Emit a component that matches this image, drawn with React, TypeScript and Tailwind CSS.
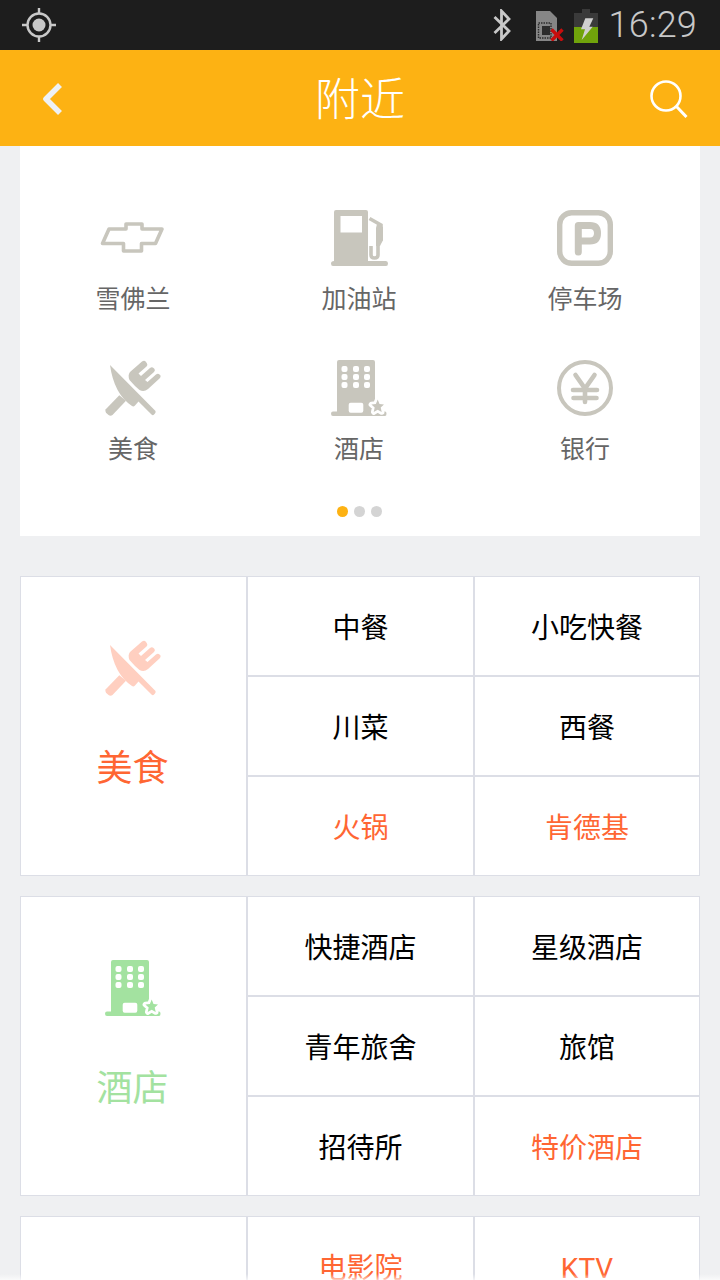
import React from 'react';

const FONT = "font-['Roboto','Noto_Sans_CJK_SC',sans-serif]";

type IconProps = { className?: string };

const IconSvg: React.FC<React.PropsWithChildren<IconProps>> = ({ className, children }) => (
    <svg viewBox="0 0 56 56" className={`w-14 h-14 overflow-visible ${className ?? ''}`} fill="currentColor">
        {children}
    </svg>
);

const ChevyIcon: React.FC<IconProps> = ({ className }) => (
    <IconSvg className={className}>
        <path
            d="M-2.5 33.5 L4 19 H21 V14 H37 V19 H57 L50.5 33.5 H36.5 V41 H18.5 V33.5 Z"
            fill="none"
            stroke="currentColor"
            strokeWidth="3.6"
            strokeLinejoin="round"
        />
    </IconSvg>
);

const GasIcon: React.FC<IconProps> = ({ className }) => (
    <IconSvg className={className}>
        <path
            fillRule="evenodd"
            d="M5 0 H35 Q37 0 37 2 V51 H55 Q57 51 57 53.5 Q57 56 55 56 H2 Q0 56 0 53.5 Q0 51 3 51 V2 Q3 0 5 0 Z M9.5 6 V22.5 H31 V6 Z"
        />
        <path d="M38.5 8.5 L50 15 V30 L47 34 V45 Q47 48 43.5 48 Q40 48 40 45 V36" fill="none" stroke="currentColor" strokeWidth="3.6" />
        <path d="M46 14 L52 17 V30 L49 36 H45 V18 Z" />
    </IconSvg>
);

const ParkingIcon: React.FC<IconProps> = ({ className }) => (
    <IconSvg className={className}>
        <rect x="2.7" y="2.7" width="50.6" height="50.6" rx="12" fill="none" stroke="currentColor" strokeWidth="5.4" />
        <path
            d="M21.3 42 V15.5 H33 Q40.5 15.5 40.5 23.3 Q40.5 31 33 31 H21.3"
            fill="none"
            stroke="currentColor"
            strokeWidth="7"
            strokeLinecap="round"
            strokeLinejoin="round"
        />
    </IconSvg>
);

const FoodIcon: React.FC<IconProps> = ({ className }) => (
    <IconSvg className={className}>
        {/* knife */}
        <path d="M5 5 L50.5 51 Q51 52 50 53.5 L48.5 55 Q47.5 55.5 46.5 54.5 L33.5 41.5 L30 45.5 Q28.5 47 27 46 Q9 34 5 5 Z" />
        {/* fork handle */}
        <path d="M0.5 49.5 L14.3 35.2 L21 40.8 L7.5 55 Q5.5 56.3 3.5 55 L1 52.8 Q0 51 0.5 49.5 Z" />
        {/* fork head */}
        <path d="M25 12 L37 1.5 Q39.5 0 41 2 L42 3.5 Q43 5 41.5 6.5 L33.5 13.5 L36 16 L45 8 Q47 6.5 48.5 8 L49.5 9 Q50.5 10.5 49 12 L40 20 L42.5 22 L51 14.5 Q53 13 54.5 14.5 L55.5 15.5 Q56 17 54.5 18.5 L43 29 Q39 32.5 34.5 30 L30 26 L24.5 20 Q22.5 15 25 12 Z" />
    </IconSvg>
);

const STAR = 'M46.7 39.5 L48.5 44 L53 44.5 L49.7 47.5 L50.7 52 L46.7 49.7 L42.7 52 L43.7 47.5 L40.4 44.5 L44.9 44 Z';

const HotelIcon: React.FC<IconProps> = ({ className }) => (
    <IconSvg className={className}>
        <path d="M8 0 H42 Q44 0 44 2 V51.5 H54 Q55.5 51.5 55.5 53.7 Q55.5 56 54 56 H2 Q0 56 0 53.7 Q0 51.5 2 51.5 H6 V2 Q6 0 8 0 Z" />
        <g fill="#fff">
            <rect x="10.5" y="6" width="6" height="6" rx="2" />
            <rect x="22" y="6" width="6" height="6" rx="2" />
            <rect x="33" y="6" width="6" height="6" rx="2" />
            <rect x="10.5" y="14" width="6" height="6" rx="2" />
            <rect x="22" y="14" width="6" height="6" rx="2" />
            <rect x="33" y="14" width="6" height="6" rx="2" />
            <rect x="10.5" y="22" width="6" height="6" rx="2" />
            <rect x="22" y="22" width="6" height="6" rx="2" />
            <rect x="33" y="22" width="6" height="6" rx="2" />
            <rect x="17.7" y="42.7" width="14.6" height="10" rx="2" />
        </g>
        <path d={STAR} fill="#fff" stroke="#fff" strokeWidth="5.5" strokeLinejoin="round" />
        <path d={STAR} />
    </IconSvg>
);

const YenIcon: React.FC<IconProps> = ({ className }) => (
    <IconSvg className={className}>
        <circle cx="28" cy="28" r="26" fill="none" stroke="currentColor" strokeWidth="4" />
        <path
            d="M18.5 15 L28 28.5 L37.5 15 M28 28.5 V42 M16 30 H40 M16.5 38 H39.5"
            fill="none"
            stroke="currentColor"
            strokeWidth="4.6"
            strokeLinecap="round"
        />
    </IconSvg>
);

const StatusBar: React.FC = () => (
    <div className="h-[50px] shrink-0 bg-[#1d1d1d] flex items-center pl-[22px] pr-[23px] text-[#c8c8c8]">
        {/* GPS */}
        <svg viewBox="0 0 34 34" className="w-[34px] h-[34px]">
            <circle cx="17" cy="17" r="11.5" fill="none" stroke="currentColor" strokeWidth="2.4" />
            <circle cx="17" cy="17" r="6.5" fill="currentColor" />
            <path d="M17 0 V6 M17 28 V34 M0 17 H6 M28 17 H34" stroke="currentColor" strokeWidth="2.4" />
        </svg>
        <div className="flex-1" />
        {/* Bluetooth */}
        <svg viewBox="0 0 18 32" className="w-[18px] h-[32px]">
            <path d="M1.5 8 L16 22 L8.5 30 V2 L16 10 L1.5 24" fill="none" stroke="currentColor" strokeWidth="2.8" />
        </svg>
        {/* SIM */}
        <svg viewBox="0 0 28 32" className="w-[28px] h-[32px] ml-[25px]">
            <path d="M0 2 H14 L21 9 V32 H0 Z" fill="#868686" />
            <rect x="2.5" y="14" width="12.5" height="15" fill="none" stroke="#2c2c2c" strokeWidth="1.4" strokeDasharray="1.5 1" />
            <rect x="6" y="17" width="8" height="9" fill="#2c2c2c" />
            <path d="M15.5 20.5 L26.5 31.5 M26.5 20.5 L15.5 31.5" stroke="#c80d0d" strokeWidth="3.4" />
        </svg>
        {/* Battery */}
        <svg viewBox="0 0 24 34" className="w-[24px] h-[34px] ml-[10px] mt-[1px]">
            <rect x="8" y="0" width="8" height="4" fill="#3a3a3a" />
            <rect x="0" y="4" width="24" height="14" fill="#3a3a3a" />
            <rect x="0" y="18" width="24" height="16" fill="#70a30b" />
            <path d="M11.3 9.3 H19.3 L15.3 17.7 H18.7 L7.7 31 L11 20.3 H7 Z" fill="#d0d0d0" />
        </svg>
        <span className="ml-[11px] font-['Roboto',sans-serif] font-light text-[36px] leading-[50px] tracking-[0.2px]">16:29</span>
    </div>
);

const TopBar: React.FC = () => (
    <header className="h-24 shrink-0 bg-[#fdb213] flex items-center pl-[40px] pr-[32px]">
        <div className="flex-1">
            <svg viewBox="0 0 24 34" className="w-6 h-[34px] mt-[2px]">
                <path d="M20 3 L6 17 L20 31" fill="none" stroke="#eef1f5" strokeWidth="5.6" strokeLinejoin="round" />
            </svg>
        </div>
        <h1 className={`${FONT} text-white text-[45px] leading-none font-light pt-1`}>附近</h1>
        <div className="flex-1 flex justify-end pl-[8px]">
            <svg viewBox="0 0 38 38" className="w-[38px] h-[38px] mt-[1px]">
                <circle cx="16" cy="16" r="14.5" fill="none" stroke="#fff" strokeWidth="2.6" />
                <path d="M26.5 26.5 L36.5 37" fill="none" stroke="#fff" strokeWidth="3" />
            </svg>
        </div>
    </header>
);

const shortcuts = [
    { label: '雪佛兰', Icon: ChevyIcon },
    { label: '加油站', Icon: GasIcon },
    { label: '停车场', Icon: ParkingIcon },
    { label: '美食', Icon: FoodIcon },
    { label: '酒店', Icon: HotelIcon },
    { label: '银行', Icon: YenIcon },
];

const ShortcutCard: React.FC = () => (
    <section className="mx-5 h-[390px] shrink-0 bg-white pt-16">
        <div className="grid grid-cols-[226px_226px_226px] grid-rows-[150px_150px]">
            {shortcuts.map(({ label, Icon }) => (
                <div key={label} className="flex flex-col items-center">
                    <Icon className="text-[#c8c6bd]" />
                    <span className={`${FONT} mt-4 text-[25px] leading-9 text-[#666666]`}>{label}</span>
                </div>
            ))}
        </div>
        <div className="flex justify-center gap-[6px] -mt-[4px] pr-[2px]">
            <span className="w-[11px] h-[11px] rounded-full bg-[#fdb213]" />
            <span className="w-[11px] h-[11px] rounded-full bg-[#d4d4d4]" />
            <span className="w-[11px] h-[11px] rounded-full bg-[#d4d4d4]" />
        </div>
    </section>
);

type Cell = { text: string; hot?: boolean };

type Category = {
    title?: string;
    titleClass?: string;
    Icon?: React.FC<IconProps>;
    iconClass?: string;
    cells: Cell[];
};

const categories: Category[] = [
    {
        title: '美食',
        titleClass: 'text-[#ff6633]',
        Icon: FoodIcon,
        iconClass: 'text-[#ffcfc0]',
        cells: [{ text: '中餐' }, { text: '小吃快餐' }, { text: '川菜' }, { text: '西餐' }, { text: '火锅', hot: true }, { text: '肯德基', hot: true }],
    },
    {
        title: '酒店',
        titleClass: 'text-[#a3e2a0]',
        Icon: HotelIcon,
        iconClass: 'text-[#a3e2a0]',
        cells: [{ text: '快捷酒店' }, { text: '星级酒店' }, { text: '青年旅舍' }, { text: '旅馆' }, { text: '招待所' }, { text: '特价酒店', hot: true }],
    },
    {
        // cut off by the bottom of the screen
        cells: [{ text: '电影院', hot: true }, { text: 'KTV', hot: true }, { text: '' }, { text: '' }, { text: '' }, { text: '' }],
    },
];

const CategoryBlock: React.FC<{ category: Category }> = ({ category }) => {
    const { title, titleClass, Icon, iconClass, cells } = category;
    return (
        <section className="mx-5 h-[300px] shrink-0 border border-[#dcdee6] bg-[#dcdee6] grid grid-cols-[225px_225px_224px] grid-rows-[98px_98px_98px] gap-[2px]">
            <div className="row-span-3 bg-white flex flex-col items-center pt-[63px] pr-[2px]">
                {Icon && <Icon className={iconClass} />}
                <span className={`${FONT} mt-[46px] text-4xl leading-[54px] ${titleClass ?? ''}`}>{title}</span>
            </div>
            {cells.map((cell, i) => (
                <div
                    key={i}
                    className={`${FONT} bg-white flex items-center justify-center pt-[6px] text-[28px] ${cell.hot ? 'text-[#ff6633]' : 'text-black'}`}
                >
                    {cell.text}
                </div>
            ))}
        </section>
    );
};

export default function App() {
    return (
        <div className="relative w-[720px] h-[1280px] overflow-hidden bg-[#eff0f2] flex flex-col">
            <StatusBar />
            <TopBar />
            <ShortcutCard />
            <div className="flex flex-col gap-5 mt-10">
                {categories.map((category, i) => (
                    <CategoryBlock key={i} category={category} />
                ))}
            </div>
            {/* Bottom fade */}
            <div className="absolute left-0 right-0 bottom-0 h-[6px] bg-gradient-to-b from-white/0 to-white/70" />
        </div>
    );
}
